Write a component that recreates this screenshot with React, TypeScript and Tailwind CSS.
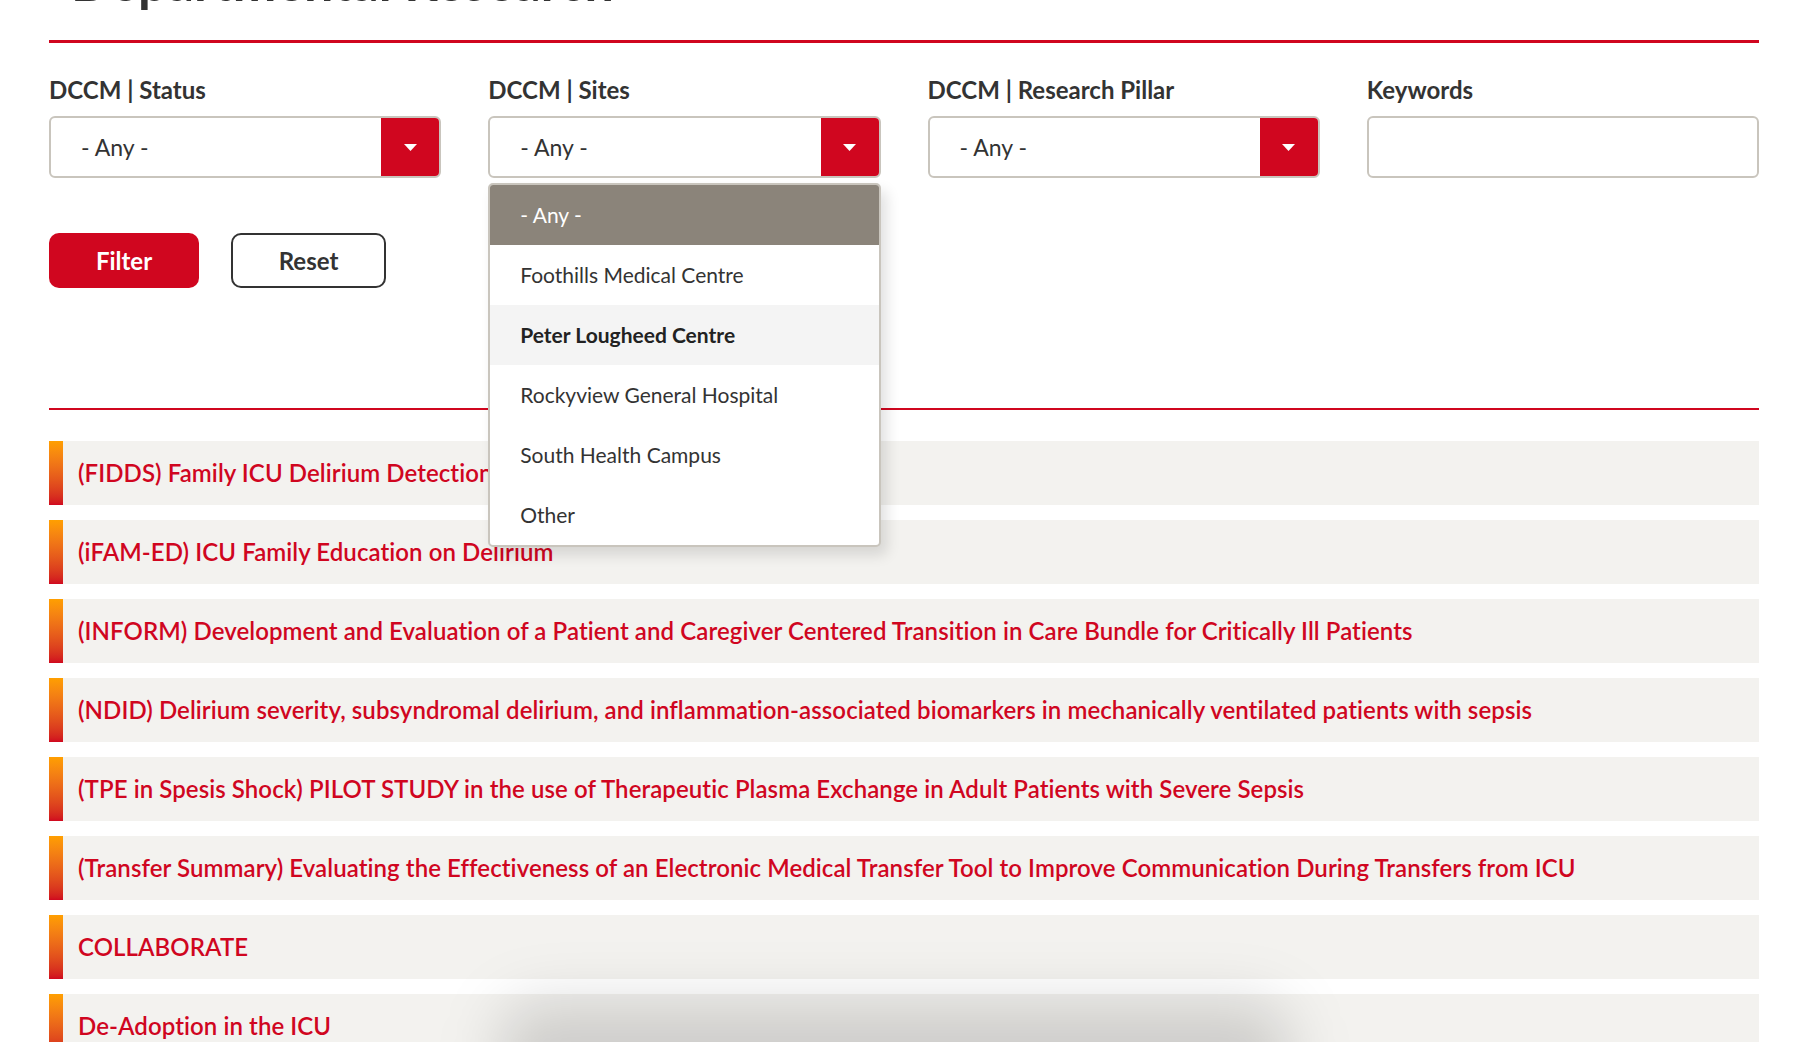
import React from 'react';

const RED = 'bg-[#d0061f]';

const filters = [
  { label: 'DCCM | Status', value: '- Any -' },
  { label: 'DCCM | Sites', value: '- Any -', open: true },
  { label: 'DCCM | Research Pillar', value: '- Any -' },
];

const siteOptions = [
  'Foothills Medical Centre',
  'Peter Lougheed Centre',
  'Rockyview General Hospital',
  'South Health Campus',
  'Other',
];

const projects = [
  '(FIDDS) Family ICU Delirium Detection Study',
  '(iFAM-ED) ICU Family Education on Delirium',
  '(INFORM) Development and Evaluation of a Patient and Caregiver Centered Transition in Care Bundle for Critically Ill Patients',
  '(NDID) Delirium severity, subsyndromal delirium, and inflammation-associated biomarkers in mechanically ventilated patients with sepsis',
  '(TPE in Spesis Shock) PILOT STUDY in the use of Therapeutic Plasma Exchange in Adult Patients with Severe Sepsis',
  '(Transfer Summary) Evaluating the Effectiveness of an Electronic Medical Transfer Tool to Improve Communication During Transfers from ICU',
  'COLLABORATE',
  'De-Adoption in the ICU',
  'Delirium in the ICU',
];

const Caret = () => (
  <svg width="13" height="7" viewBox="0 0 13 7">
    <path d="M0 0 H13 L6.5 7 Z" fill="#fff" />
  </svg>
);

const SitesDropdown = () => (
  <div className="absolute left-0 right-0 top-[calc(100%+5px)] z-10 overflow-hidden rounded-[5px] border-2 border-[#c9c5bd] bg-white shadow-[6px_8px_14px_rgba(0,0,0,0.12)]">
    <div className="flex h-[60px] items-center bg-[#8b847a] px-[30px] text-[21px] text-white">- Any -</div>
    {siteOptions.map((opt) => (
      <div
        key={opt}
        className={`flex h-[60px] items-center px-[30px] text-[21px] ${
          opt === 'Peter Lougheed Centre' ? 'bg-[#f4f4f4] font-bold text-[#222]' : 'text-[#333]'
        }`}
      >
        {opt}
      </div>
    ))}
  </div>
);

const App: React.FC = () => {
  return (
    <div className="relative h-[1042px] w-full overflow-hidden bg-white font-['Lato',sans-serif] text-[#333]">
      <div className="pl-[49px] pr-[58px]">
        <h1 className="-mt-[47px] h-[56px] pl-[22px] text-[52px] font-bold leading-[56px] text-[#333]">
          Departmental Research
        </h1>
        <div className={`mt-[31px] h-[3px] ${RED}`} />

        <div className="mt-[35px] grid grid-cols-4 gap-x-[47px]">
          {filters.map((f) => (
            <div key={f.label} className="relative">
              <div className="h-[24px] text-[24px] font-bold leading-[24px] text-[#333]">{f.label}</div>
              <div className="mt-[14px] flex h-[62px] rounded-[6px] border-2 border-[#c9c5bd] bg-white">
                <div className="flex flex-1 items-center pl-[30px] text-[23px] text-[#333]">{f.value}</div>
                <div className={`flex w-[58px] items-center justify-center rounded-r-[4px] ${RED}`}>
                  <Caret />
                </div>
              </div>
              {f.open && <SitesDropdown />}
            </div>
          ))}
          <div>
            <div className="h-[24px] text-[24px] font-bold leading-[24px] text-[#333]">Keywords</div>
            <div className="mt-[14px] h-[62px] rounded-[6px] border-2 border-[#c9c5bd] bg-white" />
          </div>
        </div>

        <div className="mt-[55px] flex gap-[32px]">
          <button className={`h-[55px] w-[150px] rounded-[10px] text-[24px] font-bold text-white ${RED}`}>
            Filter
          </button>
          <button className="h-[55px] w-[155px] rounded-[10px] border-2 border-[#333] bg-white text-[24px] font-bold text-[#333]">
            Reset
          </button>
        </div>

        <div className={`mt-[120px] h-[2px] ${RED}`} />

        <div className="mt-[31px] flex flex-col gap-[15px]">
          {projects.map((p) => (
            <div key={p} className="flex h-[64px] bg-[#f3f2ef]">
              <div className="w-[14px] shrink-0 bg-gradient-to-b from-[#ff9f00] to-[#d0061f]" />
              <div className="flex items-center pl-[15px] text-[24px] font-semibold tracking-[0.08px] text-[#d0061f]">
                {p}
              </div>
            </div>
          ))}
        </div>
      </div>

      <div className="pointer-events-none absolute bottom-[-70px] left-[500px] h-[110px] w-[790px] rounded-[40px] bg-black/15 blur-[30px]" />
    </div>
  );
};

export default App;
